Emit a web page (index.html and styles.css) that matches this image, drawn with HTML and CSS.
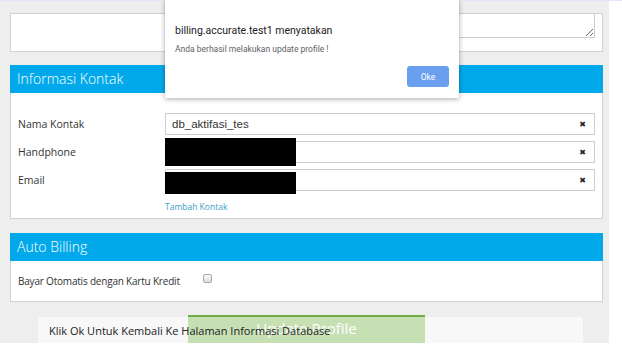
FILE: index.html
```html
<!DOCTYPE html>
<html lang="en">
<head>
    <meta charset="UTF-8">
    <meta name="viewport" content="width=device-width, initial-scale=1.0">
    <title>Update Profile</title>
    <link rel="stylesheet" href="styles.css">
</head>
<body>
    <div class="topline"></div>

    <div class="page">
        <div class="card notes">
            <textarea class="notes-area"></textarea>
        </div>

        <div class="section">
            <div class="section-head">Informasi Kontak</div>
            <div class="section-body kontak">
                <div class="row">
                    <label>Nama Kontak</label>
                    <div class="field">
                        <span class="value">db_aktifasi_tes</span>
                        <span class="clear">&#x2716;</span>
                    </div>
                </div>
                <div class="row">
                    <label>Handphone</label>
                    <div class="field">
                        <span class="value"></span>
                        <span class="clear">&#x2716;</span>
                        <div class="redact redact-phone"></div>
                    </div>
                </div>
                <div class="row">
                    <label>Email</label>
                    <div class="field">
                        <span class="value"></span>
                        <span class="clear">&#x2716;</span>
                        <div class="redact redact-mail"></div>
                    </div>
                </div>
                <div class="row">
                    <span></span>
                    <a href="#tambah" class="add-link">Tambah Kontak</a>
                </div>
            </div>
        </div>

        <div class="section">
            <div class="section-head">Auto Billing</div>
            <div class="section-body billing">
                <label>Bayar Otomatis dengan Kartu Kredit</label>
                <span class="checkbox"></span>
            </div>
        </div>

        <div class="footer">
            <button class="update-btn">Update Profile</button>
            <div class="toast">
                <span class="toast-text">Klik Ok Untuk Kembali Ke Halaman Informasi Database</span>
            </div>
        </div>
    </div>

    <div class="dialog">
        <div class="dialog-title">billing.accurate.test1 menyatakan</div>
        <div class="dialog-msg">Anda berhasil melakukan update profile !</div>
        <div class="dialog-actions">
            <button class="ok-btn">Oke</button>
        </div>
    </div>
</body>
</html>
```

FILE: styles.css
```css
body {
    margin: 0;
    padding: 0;
    background-color: #ffffff;
    font-family: "Open Sans", Arial, sans-serif;
    color: #333333;
    height: 355px;
    overflow: hidden;
}

.topline {
    height: 1px;
    background-color: #e6e6f8;
}

.page {
    width: 593px;
    height: 330px;
    padding: 12px 6px 0 10px;
    background-color: #eeeeee;
    box-sizing: content-box;
    overflow: hidden;
}

.card {
    background-color: #ffffff;
    border: 1px solid #d2d2d2;
}

.notes {
    height: 37px;
    display: flex;
    justify-content: flex-end;
    padding-right: 7px;
}

.notes-area {
    width: 430px;
    height: 25px;
    margin: -1px 0 0 0;
    border: 1px solid #cccccc;
    box-sizing: border-box;
    resize: vertical;
    background-color: #ffffff;
}

.section {
    margin-top: 13px;
}

.section + .section {
    margin-top: 14px;
}

.section-head {
    height: 28px;
    line-height: 28px;
    background-color: #02a9ea;
    color: #ffffff;
    font-size: 14px;
    font-weight: 300;
    padding-left: 7px;
}

.section-body {
    background-color: #ffffff;
    border: 1px solid #d2d2d2;
    border-top: none;
}

.kontak {
    height: 126px;
    box-sizing: border-box;
    padding: 20px 7px 0 7px;
    display: flex;
    flex-direction: column;
    gap: 6px;
}

.row {
    display: grid;
    grid-template-columns: 147px 430px;
    align-items: center;
}

.row label {
    font-size: 10.5px;
    color: #333333;
}

.field {
    position: relative;
    height: 22px;
    border: 1px solid #cccccc;
    box-sizing: border-box;
    display: flex;
    align-items: center;
    justify-content: space-between;
    padding: 0 8px 0 6px;
}

.value {
    font-family: "Liberation Sans", Arial, sans-serif;
    font-size: 11.5px;
    color: #333333;
}

.clear {
    font-family: "DejaVu Sans", sans-serif;
    font-size: 8px;
    color: #222222;
}

.redact {
    position: absolute;
    left: -1px;
    width: 131px;
    background-color: #000000;
}

.redact-phone {
    top: -4px;
    height: 28px;
}

.redact-mail {
    top: 2px;
    height: 22px;
}

.add-link {
    font-size: 8.5px;
    color: #3d9ec6;
    text-decoration: none;
    margin-top: 4px;
}

.billing {
    height: 41px;
    box-sizing: border-box;
    padding-left: 7px;
    display: flex;
    align-items: center;
}

.billing label {
    font-size: 10px;
    letter-spacing: -0.2px;
    white-space: nowrap;
    width: 185px;
}

.checkbox {
    width: 7px;
    height: 7px;
    border: 1px solid #a8a8a8;
    border-radius: 2px;
    background: linear-gradient(#fdfdfd, #dcdcdc);
    margin-top: -5px;
}

.footer {
    position: relative;
    height: 41px;
    display: flex;
    justify-content: center;
}

.update-btn {
    position: relative;
    z-index: 1;
    margin-top: 13px;
    width: 237px;
    height: 30px;
    border: none;
    border-top: 2px solid #6fae45;
    background-color: #c6e0b4;
    color: #ffffff;
    font-family: "Open Sans", Arial, sans-serif;
    font-size: 15px;
    padding: 0 0 6px 0;
}

.toast {
    position: absolute;
    left: 28px;
    top: 15px;
    width: 545px;
    height: 30px;
    background-color: #f8f8f8;
    border-radius: 3px;
}

.toast-text {
    position: relative;
    z-index: 2;
    display: block;
    padding: 6px 0 0 11px;
    font-size: 11px;
    color: #222222;
}

.dialog {
    position: absolute;
    left: 165px;
    top: 0;
    width: 294px;
    height: 98px;
    background-color: #ffffff;
    box-shadow: 0 1px 5px rgba(0, 0, 0, 0.35);
    font-family: Roboto, Arial, sans-serif;
    box-sizing: border-box;
    padding: 24px 10px 0 10px;
}

.dialog-title {
    font-size: 10.5px;
    color: #202124;
}

.dialog-msg {
    margin-top: 7px;
    font-size: 8.5px;
    color: #5f6368;
}

.dialog-actions {
    display: flex;
    justify-content: flex-end;
    margin-top: 12px;
}

.ok-btn {
    width: 42px;
    height: 21px;
    border: none;
    border-radius: 3px;
    background-color: #6a9ff0;
    color: #ffffff;
    font-family: Roboto, Arial, sans-serif;
    font-size: 8.5px;
}
```
